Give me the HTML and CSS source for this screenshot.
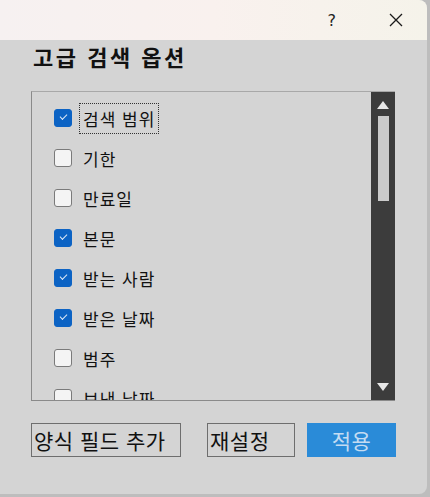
FILE: index.html
```html
<!DOCTYPE html>
<html lang="ko">
<head>
  <meta charset="UTF-8">
  <title>고급 검색 옵션</title>
  <link rel="stylesheet" href="styles.css">
</head>
<body>
  <div class="ventana">
    <div class="barra-titulo">
      <span class="btn-ayuda">?</span>
      <span class="btn-cerrar">
        <svg width="14" height="14" viewBox="0 0 14 14">
          <path d="M1 1 L13 13 M13 1 L1 13" stroke="#1a1a1a" stroke-width="1.3" fill="none"/>
        </svg>
      </span>
    </div>

    <div class="contenido">
      <h1 class="titulo">고급 검색 옵션</h1>

      <div class="lista">
        <div class="items">
          <div class="item"><span class="caja marcada"></span><span class="etiqueta foco">검색 범위</span></div>
          <div class="item"><span class="caja"></span><span class="etiqueta">기한</span></div>
          <div class="item"><span class="caja"></span><span class="etiqueta">만료일</span></div>
          <div class="item"><span class="caja marcada"></span><span class="etiqueta">본문</span></div>
          <div class="item"><span class="caja marcada"></span><span class="etiqueta">받는 사람</span></div>
          <div class="item"><span class="caja marcada"></span><span class="etiqueta">받은 날짜</span></div>
          <div class="item"><span class="caja"></span><span class="etiqueta">범주</span></div>
          <div class="item"><span class="caja"></span><span class="etiqueta">보낸 날짜</span></div>
        </div>
        <div class="scroll">
          <svg class="flecha" width="12" height="8" viewBox="0 0 12 8"><path d="M6 0 L12 8 L0 8 Z" fill="#e6e6e6"/></svg>
          <div class="pulgar"></div>
          <div class="relleno"></div>
          <svg class="flecha" width="12" height="8" viewBox="0 0 12 8"><path d="M0 0 L12 0 L6 8 Z" fill="#e6e6e6"/></svg>
        </div>
      </div>

      <div class="botones">
        <button class="boton ancho">양식 필드 추가</button>
        <button class="boton medio">재설정</button>
        <button class="boton aplicar">적용</button>
      </div>
    </div>
  </div>
</body>
</html>
```

FILE: styles.css
```css
body {
  margin: 0;
  background: #bdbdbd;
  font-family: 'Noto Sans CJK KR', 'Noto Sans', sans-serif;
}

.ventana {
  width: 427px;
  height: 494px;
  background: #d4d4d4;
  border-radius: 0 8px 8px 0;
  overflow: hidden;
  display: flex;
  flex-direction: column;
}

.barra-titulo {
  height: 40px;
  background: linear-gradient(90deg, #f6f1f1, #f9f1ee 50%, #f5f3ea);
  display: flex;
  align-items: center;
  justify-content: flex-end;
  flex-shrink: 0;
}

.btn-ayuda {
  font-family: 'DejaVu Sans', sans-serif;
  font-size: 16px;
  color: #222;
  margin-right: 53px;
}

.btn-cerrar {
  display: flex;
  margin-right: 24px;
}

.contenido {
  padding-left: 31px;
}

.titulo {
  margin: 1px 0 0 2px;
  height: 30px;
  line-height: 30px;
  font-size: 22px;
  font-weight: bold;
  letter-spacing: 2.5px;
  color: #111;
}

.lista {
  margin-top: 20px;
  width: 364px;
  height: 310px;
  display: flex;
  border-left: 1px solid #8a8a8a;
  border-top: 1px solid #a8a8a8;
  border-bottom: 1px solid #8a8a8a;
  box-sizing: border-box;
  overflow: hidden;
}

.items {
  flex: 1;
  padding-top: 6px;
  overflow: hidden;
}

.item {
  height: 40px;
  display: flex;
  align-items: center;
  padding-left: 22px;
}

.caja {
  width: 16px;
  height: 16px;
  border: 1px solid #7a7a7a;
  border-radius: 3px;
  background: #f4f4f4;
  margin-right: 7px;
  flex-shrink: 0;
  position: relative;
}

.caja.marcada {
  background: #0c63c4;
  border-color: #0c63c4;
}

.caja.marcada::after {
  content: "";
  position: absolute;
  left: 5px;
  top: 4px;
  width: 6px;
  height: 3px;
  border-left: 1px solid #dfeaf7;
  border-bottom: 1px solid #dfeaf7;
  transform: rotate(-45deg);
}

.etiqueta {
  font-size: 17px;
  letter-spacing: 1px;
  color: #111;
  padding: 3px 3px;
  line-height: 23px;
  border: 1px dotted transparent;
}

.etiqueta.foco {
  border-color: #333;
}

.scroll {
  width: 24px;
  background: #3c3c3c;
  display: flex;
  flex-direction: column;
  align-items: center;
  flex-shrink: 0;
}

.flecha {
  margin-top: 9px;
  flex-shrink: 0;
}

.pulgar {
  width: 11px;
  height: 85px;
  background: #cacaca;
  margin-top: 7px;
}

.relleno {
  flex: 1;
}

.scroll .flecha:last-child {
  margin-top: 0;
  margin-bottom: 9px;
}

.botones {
  display: flex;
  margin-top: 22px;
}

.boton {
  height: 34px;
  border: 1px solid #6e6e6e;
  background: #d4d4d4;
  font-family: 'Noto Sans CJK KR', 'Noto Sans', sans-serif;
  font-size: 21px;
  letter-spacing: 0.5px;
  color: #111;
  padding: 0 2px;
  text-align: left;
  cursor: pointer;
}

.ancho {
  width: 150px;
}

.medio {
  width: 88px;
  margin-left: 26px;
}

.aplicar {
  width: 89px;
  margin-left: 12px;
  background: #2a8bd8;
  border-color: #2a8bd8;
  color: #c4dcf2;
  text-align: center;
}
```
